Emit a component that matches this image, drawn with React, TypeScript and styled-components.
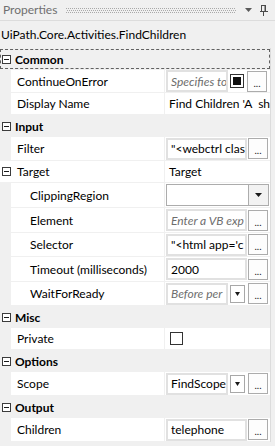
import React from "react";
import styled, { createGlobalStyle, css } from "styled-components";

const GlobalStyle = createGlobalStyle`
  html, body {
    margin: 0;
    padding: 0;
    background: #f0f0f0;
  }
  body {
    font-family: Lato, "Open Sans", "Noto Sans", sans-serif;
    font-size: 12px;
    color: #000;
  }
`;

const Panel = styled.div`
  width: 275px;
  height: 446px;
  overflow: hidden;
  background: #f0f0f0;
  display: flex;
  flex-direction: column;
`;

const TitleBar = styled.div`
  height: 20px;
  border-bottom: 1px solid #dcdcdc;
  display: flex;
  align-items: center;
  padding-left: 3px;
  flex-shrink: 0;
`;

const TitleText = styled.span`
  color: #6f6f6f;
  font-size: 12px;
  line-height: 20px;
`;

const Grip = styled.svg`
  margin-left: 9px;
  width: 170px;
  height: 5px;
`;

const TitleIcon = styled.svg`
  margin-left: ${({ $gap }: { $gap: number }) => $gap}px;
  flex-shrink: 0;
`;

const Subtitle = styled.div`
  height: 27px;
  padding-left: 1px;
  display: flex;
  align-items: center;
  flex-shrink: 0;
`;

const Grid = styled.div`
  width: 270px;
  border-right: 1px solid #dcdcdc;
  display: flex;
  flex-direction: column;
`;

const CategoryRow = styled.div<{ $focused?: boolean }>`
  position: relative;
  height: 22px;
  display: flex;
  align-items: center;
  background: #f0f0f0;
  ${({ $focused }) =>
    $focused &&
    css`
      &::after {
        content: "";
        position: absolute;
        left: 0;
        right: 0;
        top: 1px;
        bottom: 1px;
        border: 1px dashed #606060;
      }
    `}
`;

const Expander = styled.span<{ $left?: number }>`
  position: relative;
  box-sizing: border-box;
  width: 9px;
  height: 9px;
  margin-left: ${({ $left }) => $left ?? 2}px;
  border: 1px solid #3c3c3c;
  background: #fff;
  flex-shrink: 0;
  &::before {
    content: "";
    position: absolute;
    left: 1px;
    right: 1px;
    top: 3px;
    height: 1px;
    background: #1a1a1a;
  }
`;

const CategoryLabel = styled.span`
  font-weight: 700;
  margin-left: 4px;
`;

const PropRow = styled.div<{ $h: number }>`
  box-sizing: border-box;
  height: ${({ $h }) => $h}px;
  display: flex;
  background: #fff;
  border-bottom: 1px solid #f0f0f0;
`;

const Gutter = styled.div<{ $open?: boolean }>`
  width: 11px;
  flex-shrink: 0;
  display: flex;
  align-items: center;
  background: ${({ $open }) => ($open ? "#fff" : "#f0f0f0")};
`;

const NameCell = styled.div<{ $nested?: boolean }>`
  width: 154px;
  flex-shrink: 0;
  box-sizing: border-box;
  border-right: 1px solid #f0f0f0;
  padding-left: ${({ $nested }) => ($nested ? 19 : 6)}px;
  display: flex;
  align-items: center;
  white-space: nowrap;
  overflow: hidden;
`;

const ValueCell = styled.div`
  flex: 1;
  min-width: 0;
  display: flex;
  align-items: center;
  padding-left: 1px;
  overflow: hidden;
`;

const PlainValue = styled.span`
  padding-left: 3px;
  white-space: pre;
  overflow: hidden;
`;

const TextBox = styled.div<{ $wide?: boolean; $hint?: boolean }>`
  box-sizing: border-box;
  width: ${({ $wide }) => ($wide ? 81 : 62)}px;
  height: 22px;
  border: 2px solid #e1e1e1;
  background: #fff;
  padding-left: 3px;
  display: flex;
  align-items: center;
  white-space: pre;
  overflow: hidden;
  flex-shrink: 0;
  ${({ $hint }) =>
    $hint &&
    css`
      font-style: italic;
      color: #6d6d6d;
    `}
`;

const ComboBox = styled.div`
  box-sizing: border-box;
  width: 82px;
  height: 22px;
  border: 1px solid #acacac;
  border-right: none;
  background: #fff;
  flex-shrink: 0;
`;

const ComboArrow = styled.div`
  box-sizing: border-box;
  width: 21px;
  height: 22px;
  border: 1px solid #acacac;
  background: #f2f2f2;
  display: flex;
  align-items: center;
  justify-content: center;
`;

const DropButton = styled.div`
  box-sizing: border-box;
  width: 15px;
  height: 18px;
  margin-left: 2px;
  border: 1px solid #a8a8a8;
  background: #fff;
  display: flex;
  align-items: center;
  justify-content: center;
  flex-shrink: 0;
`;

const DotsButton = styled.div<{ $gap?: number }>`
  box-sizing: border-box;
  width: 20px;
  height: 21px;
  margin-left: ${({ $gap }) => $gap ?? 3}px;
  border: 1px solid #acacac;
  background: #fdfdfd;
  display: flex;
  align-items: flex-end;
  justify-content: center;
  font-size: 10px;
  line-height: 10px;
  padding-bottom: 3px;
  flex-shrink: 0;
  color: #222;
`;

const StateBox = styled.div`
  box-sizing: border-box;
  width: 14px;
  height: 14px;
  margin-left: 2px;
  border: 1px solid #333;
  background: #fff;
  display: flex;
  align-items: center;
  justify-content: center;
  flex-shrink: 0;
  &::before {
    content: "";
    width: 8px;
    height: 8px;
    background: #111;
  }
`;

const CheckBox = styled.div`
  box-sizing: border-box;
  width: 13px;
  height: 13px;
  margin-left: 4px;
  border: 1px solid #333;
  background: #fff;
`;

const Tri = ({ w = 7 }: { w?: number }) => (
  <svg width={w} height={4} viewBox={`0 0 ${w} 4`}>
    <polygon points={`0,0 ${w},0 ${w / 2},4`} fill="#1a1a1a" />
  </svg>
);

const Dots = ({ gap }: { gap?: number }) => <DotsButton $gap={gap}>...</DotsButton>;

type Row =
  | { kind: "cat"; label: string; focused?: boolean }
  | {
      kind: "prop";
      name: string;
      h: number;
      nested?: boolean;
      open?: boolean;
      value: React.ReactNode;
    };

// values are clipped by their editors, as in the designer
const rows: Row[] = [
  { kind: "cat", label: "Common", focused: true },
  {
    kind: "prop",
    name: "ContinueOnError",
    h: 23,
    value: (
      <>
        <TextBox $hint>Specifies to</TextBox>
        <StateBox />
        <Dots gap={3} />
      </>
    ),
  },
  {
    kind: "prop",
    name: "Display Name",
    h: 22,
    value: <PlainValue>Find Children 'A  sh</PlainValue>,
  },
  { kind: "cat", label: "Input" },
  {
    kind: "prop",
    name: "Filter",
    h: 24,
    value: (
      <>
        <TextBox $wide>"&lt;webctrl clas</TextBox>
        <Dots gap={1} />
      </>
    ),
  },
  {
    kind: "prop",
    name: "Target",
    h: 22,
    open: true,
    value: <PlainValue>Target</PlainValue>,
  },
  {
    kind: "prop",
    name: "ClippingRegion",
    h: 25,
    nested: true,
    value: (
      <>
        <ComboBox />
        <ComboArrow>
          <Tri />
        </ComboArrow>
      </>
    ),
  },
  {
    kind: "prop",
    name: "Element",
    h: 25,
    nested: true,
    value: (
      <>
        <TextBox $wide $hint>Enter a VB exp</TextBox>
        <Dots gap={1} />
      </>
    ),
  },
  {
    kind: "prop",
    name: "Selector",
    h: 24,
    nested: true,
    value: (
      <>
        <TextBox $wide>"&lt;html app='c</TextBox>
        <Dots gap={1} />
      </>
    ),
  },
  {
    kind: "prop",
    name: "Timeout (milliseconds)",
    h: 25,
    nested: true,
    value: (
      <>
        <TextBox $wide>2000</TextBox>
        <Dots gap={1} />
      </>
    ),
  },
  {
    kind: "prop",
    name: "WaitForReady",
    h: 24,
    nested: true,
    value: (
      <>
        <TextBox $hint>Before per</TextBox>
        <DropButton>
          <Tri w={5} />
        </DropButton>
        <Dots gap={3} />
      </>
    ),
  },
  { kind: "cat", label: "Misc" },
  {
    kind: "prop",
    name: "Private",
    h: 22,
    value: <CheckBox />,
  },
  { kind: "cat", label: "Options" },
  {
    kind: "prop",
    name: "Scope",
    h: 24,
    value: (
      <>
        <TextBox>FindScope</TextBox>
        <DropButton>
          <Tri w={5} />
        </DropButton>
        <Dots gap={3} />
      </>
    ),
  },
  { kind: "cat", label: "Output" },
  {
    kind: "prop",
    name: "Children",
    h: 24,
    value: (
      <>
        <TextBox $wide>telephone</TextBox>
        <Dots gap={1} />
      </>
    ),
  },
];

export default function App() {
  return (
    <>
      <GlobalStyle />
      <Panel>
        <TitleBar>
          <TitleText>Properties</TitleText>
          <Grip viewBox="0 0 170 5">
            <defs>
              <pattern id="grip" width="2" height="4" patternUnits="userSpaceOnUse">
                <rect x="0" y="0" width="1" height="1" fill="#a9a9a9" />
                <rect x="1" y="2" width="1" height="1" fill="#a9a9a9" />
              </pattern>
            </defs>
            <rect width="170" height="5" fill="url(#grip)" />
          </Grip>
          <TitleIcon $gap={9} width="7" height="4" viewBox="0 0 7 4">
            <polygon points="0,0 7,0 3.5,4" fill="#5a5a5a" />
          </TitleIcon>
          <TitleIcon $gap={8} width="8" height="11" viewBox="0 0 8 11">
            <rect x="1.5" y="0.5" width="4" height="6" fill="none" stroke="#4a4a4a" />
            <rect x="4.5" y="0.5" width="1.5" height="6" fill="#4a4a4a" />
            <rect x="0" y="6" width="8" height="1" fill="#4a4a4a" />
            <rect x="3" y="7" width="1" height="4" fill="#4a4a4a" />
          </TitleIcon>
        </TitleBar>
        <Subtitle>UiPath.Core.Activities.FindChildren</Subtitle>
        <Grid>
          {rows.map((r, i) =>
            r.kind === "cat" ? (
              <CategoryRow key={i} $focused={r.focused}>
                <Expander />
                <CategoryLabel>{r.label}</CategoryLabel>
              </CategoryRow>
            ) : (
              <PropRow key={i} $h={r.h}>
                <Gutter $open={r.open}>{r.open && <Expander $left={2} />}</Gutter>
                <NameCell $nested={r.nested}>{r.name}</NameCell>
                <ValueCell>{r.value}</ValueCell>
              </PropRow>
            )
          )}
        </Grid>
      </Panel>
    </>
  );
}
